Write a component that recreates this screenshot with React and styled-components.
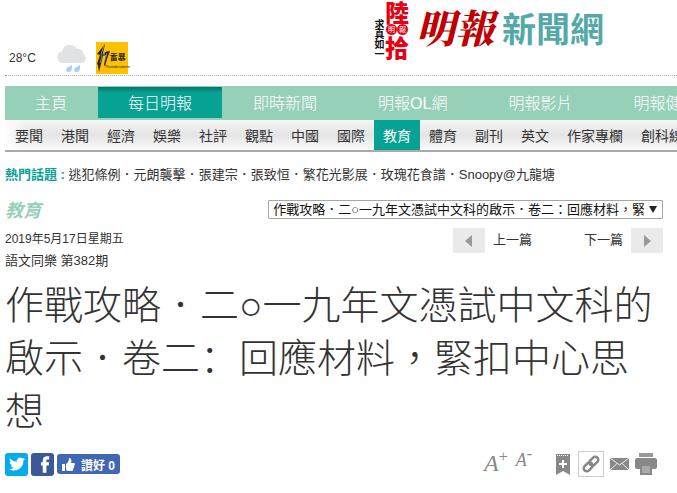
import React from 'react';
import styled, { createGlobalStyle, css } from 'styled-components';

const mainMenu = [
  '主頁',
  '每日明報',
  '即時新聞',
  '明報OL網',
  '明報影片',
  '明報健康網',
];

const subMenu = [
  '要聞',
  '港聞',
  '經濟',
  '娛樂',
  '社評',
  '觀點',
  '中國',
  '國際',
  '教育',
  '體育',
  '副刊',
  '英文',
  '作家專欄',
  '創科線',
];

const hotTopics = [
  '逃犯條例',
  '元朗襲擊',
  '張建宗',
  '張致恒',
  '繁花光影展',
  '玫瑰花食譜',
  'Snoopy@九龍塘',
];

const Weather = () => (
  <WeatherBox>
    <span>28°C</span>
    <svg width="32" height="30" viewBox="0 0 32 30" aria-hidden="true">
      <path
        fill="#e1e2e4"
        d="M7 20a6 6 0 0 1-1-11.800A8 8 0 0 1 20.500 5.500 6.500 6.500 0 0 1 27.500 11 5 5 0 0 1 26 20z"
      />
      <path
        fill="#aecdf8"
        d="M16 22c.5 4-.5 7-3.500 7-2.500 0-3-2.500-1.500-4 1.200-1.200 3.500-2 5-3zM24 22c.5 4-.5 7-3.500 7-2.500 0-3-2.500-1.500-4 1.200-1.200 3.500-2 5-3z"
      />
    </svg>
    <Thunder>
      <svg width="14" height="28" viewBox="0 0 14 28" aria-hidden="true">
        <path
          fill="#222"
          d="M9 0L7 9l1 3 1-4 5-1-3 8-2 7-1-1 2-10-3 1-2 8-2 8-1-7-1-1 3-9-3-1z"
        />
        <path d="M8 2L5 10l1 2-2 7M11 9l-2 7" stroke="#889" fill="none" />
      </svg>
      <ThunderText>
        <b>雷暴</b>
        <small>Thunderstorm</small>
      </ThunderText>
    </Thunder>
  </WeatherBox>
);

const Logo = () => (
  <LogoLink href="#home">
    <Motto>求真如一</Motto>
    <Sixty>
      <span>陸</span>
      <Dots>
        <i>明</i>
        <i>報</i>
      </Dots>
      <span>拾</span>
    </Sixty>
    <Brand>明報</Brand>
    <Site>新聞網</Site>
  </LogoLink>
);

const App = () => {
  return (
    <>
      <GlobalStyle />
      <Page>
        <Masthead>
          <Weather />
          <Logo />
        </Masthead>

        <MainNav>
          {mainMenu.map((name) => (
            <MainLink key={name} href="#menu" $active={name === '每日明報'}>
              {name}
            </MainLink>
          ))}
        </MainNav>
        <SubNav>
          {subMenu.map((name) => (
            <SubLink key={name} href="#section" $active={name === '教育'}>
              {name}
            </SubLink>
          ))}
        </SubNav>

        <Content>
          <HotTopics>
            <strong>熱門話題 : </strong>
            {hotTopics.map((topic, i) => (
              <React.Fragment key={topic}>
                {i > 0 && '．'}
                <a href="#topic">{topic}</a>
              </React.Fragment>
            ))}
          </HotTopics>

          <SectionRow>
            <SectionName>教育</SectionName>
            <SelectBox>
              <ArticleSelect aria-label="文章">
                <option>
                  作戰攻略．二○一九年文憑試中文科的啟示．卷二：回應材料，緊扣中心思想
                </option>
              </ArticleSelect>
              <SelectArrow width="8" height="7" viewBox="0 0 8 7">
                <path d="M0 0h8L4 7z" fill="#222" />
              </SelectArrow>
            </SelectBox>
          </SectionRow>

          <InfoRow>
            <div>
              <PublishDate>2019年5月17日星期五</PublishDate>
              <Issue>語文同樂 第382期</Issue>
            </div>
            <Pager>
              <PagerLink href="#prev">
                <PagerArrow>
                  <svg width="7" height="12" viewBox="0 0 7 12">
                    <path d="M7 0v12L0 6z" fill="#999" />
                  </svg>
                </PagerArrow>
                上一篇
              </PagerLink>
              <PagerLink href="#next">
                下一篇
                <PagerArrow>
                  <svg width="7" height="12" viewBox="0 0 7 12">
                    <path d="M0 0v12l7-6z" fill="#999" />
                  </svg>
                </PagerArrow>
              </PagerLink>
            </Pager>
          </InfoRow>

          <Title>
            作戰攻略．二○一九年文憑試中文科的啟示．卷二<Colon>：</Colon>
            回應材料，緊扣中心思想
          </Title>

          <ToolRow>
            <Share>
              <ShareButton $color="#00aced" aria-label="Twitter">
                <svg width="16" height="16" viewBox="0 0 24 24">
                  <path
                    fill="#fff"
                    d="M24 4.6a10 10 0 0 1-2.8.8 5 5 0 0 0 2.1-2.7c-.9.5-2 1-3.1 1.2a4.9 4.9 0 0 0-8.4 4.5A14 14 0 0 1 1.7 3.2a4.9 4.9 0 0 0 1.5 6.5 5 5 0 0 1-2.2-.6c0 2.3 1.6 4.4 3.9 4.9-.7.2-1.5.2-2.2.1a4.9 4.9 0 0 0 4.6 3.4A10 10 0 0 1 0 19.5a14 14 0 0 0 21.5-12.4A10 10 0 0 0 24 4.6z"
                  />
                </svg>
              </ShareButton>
              <ShareButton $color="#3b5998" $end aria-label="Facebook">
                <svg width="11" height="17" viewBox="0 0 12 18">
                  <path
                    fill="#fff"
                    d="M3 18V10H1V6.500h2V4.500C3 1.500 5 0 7.500 0H10v3.500H8.500C7.300 3.500 7 4 7 5v1.500h3L9.500 10H7v8z"
                  />
                </svg>
              </ShareButton>
              <LikeButton>
                <svg width="13" height="13" viewBox="0 0 13 13">
                  <path
                    fill="#fff"
                    d="M0 6h3v7H0zM4 6c2-1 3-3 3-6 2 0 3 2 2 5h3c1 0 1 1 .6 2L11 12c-.2.7-.6 1-1.4 1H6l-2-1z"
                  />
                </svg>
                讚好 0
              </LikeButton>
            </Share>
            <Tools>
              <FontButton $size="24px" aria-label="放大字型">
                A<sup>+</sup>
              </FontButton>
              <FontButton $size="18px" aria-label="縮小字型">
                A<sup>-</sup>
              </FontButton>
              <IconButton $bookmark aria-label="書籤">
                <svg width="14" height="21" viewBox="0 0 14 21">
                  <path d="M0 0h14v21l-7-4-7 4z" fill="#888" />
                  <path d="M1 1.5h12" stroke="#fff" strokeDasharray="1 1" />
                  <path d="M7 6v8M3 10h8" stroke="#fff" strokeWidth="2" />
                </svg>
              </IconButton>
              <IconButton $boxed aria-label="連結">
                <svg width="18" height="18" viewBox="0 0 18 18">
                  <g
                    transform="rotate(-45 9 9)"
                    fill="none"
                    stroke="#888"
                    strokeWidth="2.5"
                  >
                    <rect x="0" y="6" width="10" height="6" rx="3" />
                    <rect x="8" y="6" width="10" height="6" rx="3" />
                  </g>
                </svg>
              </IconButton>
              <IconButton aria-label="電郵">
                <svg width="19" height="12" viewBox="0 0 19 12">
                  <path d="M0 0h19v12H0z" fill="#888" />
                  <path
                    d="M0 0l9.500 7L19 0M0 12l7-6.500M19 12l-7-6.500"
                    stroke="#eee"
                    fill="none"
                  />
                </svg>
              </IconButton>
              <IconButton aria-label="列印">
                <svg width="22" height="22" viewBox="0 0 22 22">
                  <path d="M4 0h14v4H4z" fill="#999" />
                  <path
                    d="M2 5h18c1 0 2 1 2 2v7c0 1-1 2-2 2h-3v-5H5v5H2c-1 0-2-1-2-2V7c0-1 1-2 2-2z"
                    fill="#888"
                  />
                  <path
                    d="M6 12h10v9H6z"
                    fill="#aaa"
                    stroke="#888"
                    strokeWidth="2"
                  />
                </svg>
              </IconButton>
            </Tools>
          </ToolRow>
        </Content>
      </Page>
    </>
  );
};

export default App;

const GlobalStyle = createGlobalStyle`
  body {
    margin: 0;
    background: #fff;
    color: #333;
    font-family: 'Liberation Sans', 'Noto Sans CJK TC', sans-serif;
    font-size: 13px;
  }

  a {
    color: inherit;
    text-decoration: none;
  }

  button {
    padding: 0;
    border: 0;
    background: none;
    font-family: inherit;
    cursor: pointer;
  }

  svg {
    display: block;
    flex: none;
  }
`;

const Page = styled.div`
  padding-left: 5px;
  overflow: hidden;
`;

const Masthead = styled.header`
  display: flex;
  justify-content: space-between;
  height: 75px;
  padding-right: 73px;
  border-bottom: 1px dotted #aaa;
`;

const WeatherBox = styled.div`
  display: flex;
  align-items: center;
  align-self: flex-end;
  padding: 0 0 1px 4px;
  font-size: 12px;

  > svg {
    margin: 0 8px 0 20px;
  }
`;

const Thunder = styled.div`
  display: flex;
  align-items: center;
  width: 32px;
  height: 32px;
  background: #ffc000;
  color: #222;
`;

const ThunderText = styled.div`
  display: flex;
  flex-direction: column;
  padding-top: 8px;
  line-height: 9px;
  white-space: nowrap;

  b {
    font-size: 8px;
  }

  small {
    margin-left: -5px;
    font-family: 'Liberation Sans Narrow', 'Liberation Sans', sans-serif;
    font-size: 4px;
  }
`;

const LogoLink = styled.a`
  display: flex;
  align-items: flex-start;
  height: 62px;
`;

const Motto = styled.span`
  padding-top: 19px;
  color: #111;
  font-size: 10px;
  font-weight: 700;
  line-height: 12px;
  writing-mode: vertical-rl;
`;

const Sixty = styled.span`
  display: flex;
  flex-direction: column;
  align-items: center;
  width: 26px;
  color: #e60012;
  font-family: 'Noto Sans CJK TC', sans-serif;
  font-size: 24px;
  font-weight: 900;
  line-height: 24px;
`;

const Dots = styled.span`
  display: flex;

  i {
    width: 11px;
    border-radius: 50%;
    background: #e60012;
    color: #fff;
    font-size: 7px;
    font-style: normal;
    font-weight: 400;
    line-height: 11px;
    text-align: center;
  }
`;

const Brand = styled.span`
  padding: 0 8px 0 6px;
  color: #c00000;
  font-family: 'Noto Serif CJK TC', 'Noto Sans CJK TC', sans-serif;
  font-size: 39px;
  font-style: italic;
  font-weight: 900;
  line-height: 52px;
`;

const Site = styled.span`
  color: #54a9a8;
  font-size: 34px;
  font-weight: 700;
  line-height: 61px;
`;

const MainNav = styled.nav`
  display: flex;
  gap: 1px;
  height: 34px;
  margin-top: 10px;
  background: #97d0b8;
  overflow: hidden;
`;

const MainLink = styled.a`
  flex: none;
  height: 31px;
  margin-top: 1px;
  padding: 0 30px;
  color: #fff;
  font-size: 16px;
  font-weight: 300;
  line-height: 33px;

  ${({ $active }) =>
    $active &&
    css`
      background: linear-gradient(#04766a, #07a294 6px);
    `}
`;

const SubNav = styled.nav`
  display: flex;
  height: 30px;
  padding-left: 1px;
  border-bottom: 2px solid #aaa;
  background:
    linear-gradient(to right, #fff, transparent 20px),
    linear-gradient(#f6f6f6, #e4e4e4 50%, #fafafa);
  overflow: hidden;
`;

const SubLink = styled.a`
  flex: none;
  padding: 0 9px;
  color: ${({ $active }) => ($active ? '#fff' : '#333')};
  background: ${({ $active }) => ($active ? '#07a294' : 'transparent')};
  font-size: 14px;
  line-height: 33px;
`;

const Content = styled.main`
  padding-right: 14px;
`;

const HotTopics = styled.p`
  margin: 13px 0 0;
  line-height: 20px;

  strong {
    color: #07a294;
  }
`;

const SectionRow = styled.div`
  display: flex;
  justify-content: space-between;
  gap: 24px;
  margin-top: 15px;
`;

const SectionName = styled.h2`
  margin: 0;
  color: #97d0b8;
  font-size: 18px;
  font-style: italic;
  line-height: 23px;
`;

const SelectBox = styled.div`
  position: relative;
  width: 60%;
`;

const ArticleSelect = styled.select`
  appearance: none;
  display: block;
  width: 100%;
  height: 19px;
  padding: 0 18px 0 4px;
  border: 1px solid #a6a6a6;
  border-radius: 1px;
  background: #fff;
  color: #111;
  font-family: inherit;
  font-size: 13px;
  line-height: 17px;
`;

const SelectArrow = styled.svg`
  position: absolute;
  top: 6px;
  right: 6px;
  pointer-events: none;
`;

const InfoRow = styled.div`
  display: flex;
  justify-content: space-between;
  margin-top: 5px;
`;

const PublishDate = styled.div`
  font-size: 12px;
  line-height: 23px;
`;

const Issue = styled.div`
  line-height: 19px;
`;

const Pager = styled.nav`
  display: flex;
  gap: 52px;
`;

const PagerLink = styled.a`
  display: flex;
  gap: 8px;
  height: 25px;
  line-height: 23px;
`;

const PagerArrow = styled.span`
  display: flex;
  align-items: center;
  justify-content: center;
  width: 32px;
  background: #eaeaea;
`;

const Title = styled.h1`
  margin: 9px 0 0;
  font-size: 39px;
  font-weight: 300;
  line-height: 53px;
`;

// 冒號靠左
const Colon = styled.span`
  font-family: 'Liberation Sans', 'Noto Sans CJK SC', sans-serif;
`;

const ToolRow = styled.div`
  display: flex;
  align-items: center;
  justify-content: space-between;
  margin-top: 13px;
  padding-right: 6px;
`;

const Share = styled.div`
  display: flex;
  align-items: center;
  gap: 3px;
`;

const ShareButton = styled.button`
  display: flex;
  align-items: center;
  justify-content: ${({ $end }) => ($end ? 'flex-end' : 'center')};
  width: 23px;
  height: 23px;
  padding-right: ${({ $end }) => ($end ? '3px' : '0')};
  border-radius: 3px;
  background: ${({ $color }) => $color};
`;

const LikeButton = styled.button`
  display: flex;
  align-items: center;
  gap: 6px;
  height: 20px;
  padding: 0 5px;
  border-radius: 3px;
  background: #4267b2;
  color: #fff;
  font-size: 12px;
  font-weight: 700;
  white-space: nowrap;
`;

const Tools = styled.div`
  display: flex;
  align-items: center;
`;

const FontButton = styled.button`
  align-self: flex-start;
  margin-right: 8px;
  color: #888;
  font-family: 'Liberation Serif', serif;
  font-size: ${({ $size }) => $size};
  font-style: italic;
  line-height: ${({ $size }) => $size};

  sup {
    font-size: 16px;
    font-style: normal;
    line-height: 1px;
  }
`;

const IconButton = styled.button`
  display: flex;
  align-items: center;
  justify-content: center;
  margin-left: ${({ $bookmark }) => ($bookmark ? '16px' : '6px')};

  ${({ $boxed }) =>
    $boxed &&
    css`
      width: 26px;
      height: 26px;
      margin-left: 8px;
      border: 1px solid #ccc;
    `}
`;
